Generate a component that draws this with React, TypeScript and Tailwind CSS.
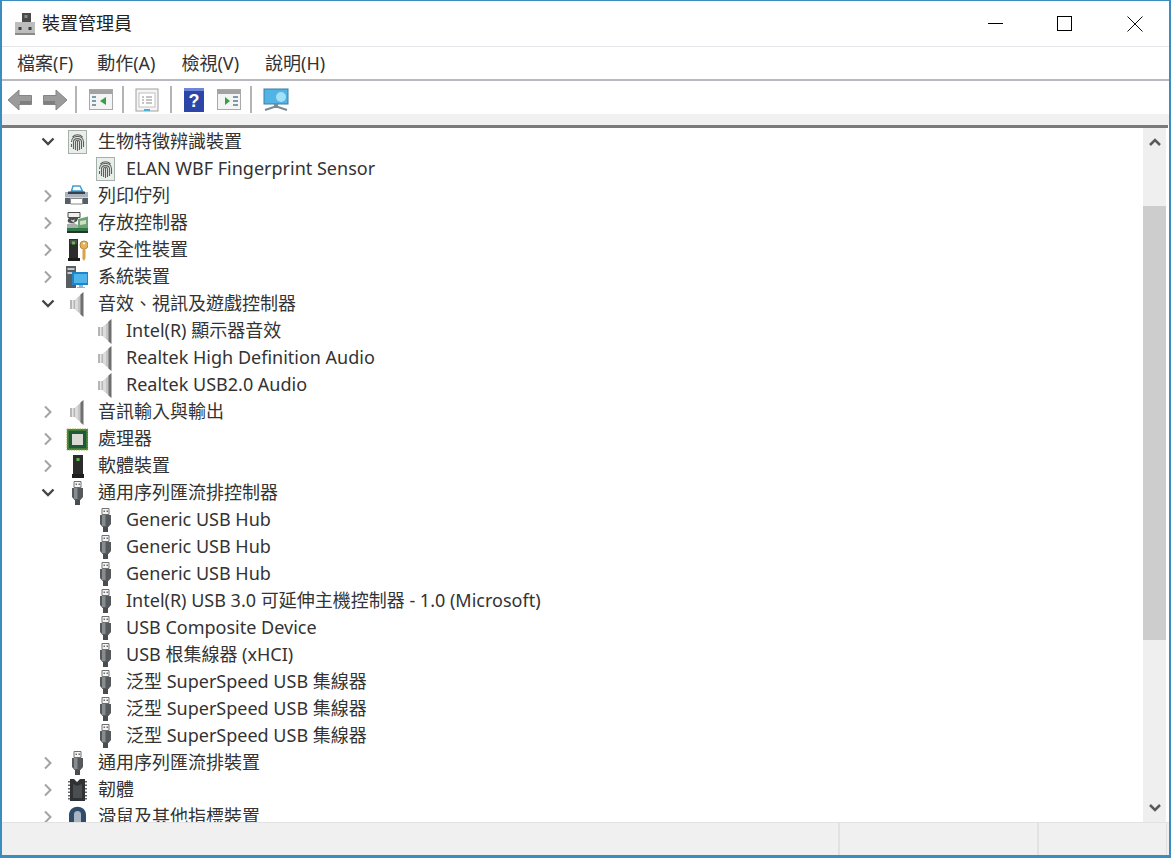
import type { ReactNode } from "react";

const FONT = "font-['Noto_Sans','Noto_Sans_CJK_TC',sans-serif]";

// ── Tree icons ────────────────────────────────────────────────────────────────
function Svg({ children }: { children: ReactNode }) {
  return (
    <svg width="24" height="26" viewBox="0 0 24 26" fill="none">
      {children}
    </svg>
  );
}

function Fingerprint() {
  return (
    <Svg>
      <rect x="4.500" y="1.500" width="18" height="23" fill="#e9eeea" stroke="#a4b0aa" />
      <g stroke="#5f6160" strokeWidth="1.100" fill="none">
        <path d="M8.500 8c3-3 7-3 10 0" />
        <path d="M7.500 13c0-7.500 12-7.500 12 0v5" />
        <path d="M9.500 20v-7c0-4.500 8-4.500 8 0v7" />
        <path d="M11.500 21v-8c0-2.300 4-2.300 4 0v8" />
        <path d="M13.500 12v10" />
        <path d="M7.500 15v3" />
      </g>
    </Svg>
  );
}

function Speaker() {
  return (
    <Svg>
      <path d="M6 9h5v9H6z" fill="#b5b5b5" />
      <path d="M8 9h1.500v9H8z" fill="#e6e6e6" />
      <path d="M11 9l8-7.500v24L11 18z" fill="#c4c4c4" />
      <path d="M16.500 3.500l3-2.500v25l-3-2.500z" fill="#6f6f6f" />
      <path d="M11 9l3-2.500v14.500l-3-3z" fill="#dcdcdc" />
    </Svg>
  );
}

function Usb() {
  return (
    <Svg>
      <path d="M10 1.500h7v6h-7z" fill="#f4f4f4" stroke="#707070" />
      <path d="M11.500 3.500h1.500v1.500h-1.500zM14.500 3.500h1.500v1.500h-1.500z" fill="#6d6d6d" />
      <path d="M8 8h11v9l-2.500 3h-6L8 17z" fill="#55595b" />
      <path d="M10 8h3.500v11H10z" fill="#878c8e" />
      <path d="M11 20h5v5h-5z" fill="#4a4d4f" />
    </Svg>
  );
}

function Printer() {
  return (
    <Svg>
      <path d="M7.500 8l1.500-5h7l2.500 5z" fill="#fff" stroke="#3f9ccf" strokeWidth="1.500" />
      <path d="M1 9h23v6H1z" fill="#aab3bb" />
      <path d="M4 8.500h17V11H4z" fill="#34424f" />
      <path d="M1 14h24v2H1z" fill="#cfd5da" />
      <path d="M1 15h5v6H1zM19 15h6v6h-6z" fill="#555f69" />
      <path d="M6.500 15.500h12v5.500h-12z" fill="#fff" stroke="#8a8a8a" />
    </Svg>
  );
}

function Storage() {
  return (
    <Svg>
      <path d="M4 2.500h12v5H4z" fill="#efefef" stroke="#4b4b4b" />
      <path d="M5 8c-2 2-2 5 2 5s7-2 7-5z" fill="#4e4e4e" />
      <path d="M7 9.500c1 1 3 1 4-.5l-1 3c-2 0-3-1-3-2.500z" fill="#dcdcdc" />
      <path d="M14 9l10-2.500V18H14z" fill="#6ea37a" />
      <path d="M3 14l7-1 4 2v3H3z" fill="#a8aeaa" />
      <path d="M16 11l6-1v4l-6 1z" fill="#cfe0bd" />
      <path d="M3 18h21v3H3z" fill="#2f7a45" />
      <path d="M3 21h21v2H3z" fill="#2d2f2e" />
    </Svg>
  );
}

function Security() {
  return (
    <Svg>
      <path d="M5 2h9v19H5z" fill="#2c2c2c" />
      <path d="M6 3h7v4H6z" fill="#4d4d4d" />
      <path d="M8 4.500h3v3H8z" fill="#63b54f" />
      <path d="M4 21h12v3H4z" fill="#1c1c1c" />
      <circle cx="20" cy="8" r="4" fill="#e3b15f" stroke="#b98a35" />
      <path d="M18.500 11h3v10l-1.500 3-1.500-2z" fill="#d8a249" />
      <circle cx="20" cy="6.500" r="1.100" fill="#fff" />
    </Svg>
  );
}

function System() {
  return (
    <Svg>
      <path d="M2 2h10v22H2z" fill="#585d62" />
      <path d="M3.500 4h7v2h-7zM3.500 8h7v2h-7z" fill="#c2c8cc" />
      <path d="M8 8h17v13H8z" fill="#1d86cb" />
      <path d="M10 10h13v9H10z" fill="#4fb4ea" />
      <path d="M15 21h4v2h2v1h-8v-1h2z" fill="#89b7cf" />
    </Svg>
  );
}

function Cpu() {
  return (
    <Svg>
      <rect x="3" y="3" width="21" height="21" fill="#3f7c35" stroke="#a5a244" strokeDasharray="1.500 1" />
      <rect x="5" y="5" width="17" height="17" fill="#1c5a38" />
      <rect x="8" y="8" width="11" height="11" fill="#dadad2" />
    </Svg>
  );
}

function Software() {
  return (
    <Svg>
      <path d="M9 2h10v19H9z" fill="#2b2b2b" />
      <path d="M12.500 5h3v3h-3z" fill="#63b54f" />
      <path d="M8 21h12v4H8z" fill="#1e1e1e" />
    </Svg>
  );
}

function Firmware() {
  return (
    <Svg>
      <path d="M6 2h4l3 3 3-3h5v22H6z" fill="#2f3234" />
      <path d="M9 7l4 2 5-2v14H9z" fill="#4a4e50" />
      <path d="M4 4h2v1.500H4zM4 7.500h2V9H4zM4 11h2v1.500H4zM4 14.500h2V16H4zM4 18h2v1.500H4zM4 21h2v1.500H4zM21 4h2v1.500h-2zM21 7.500h2V9h-2zM21 11h2v1.500h-2zM21 14.500h2V16h-2zM21 18h2v1.500h-2zM21 21h2v1.500h-2z" fill="#666" />
    </Svg>
  );
}

function Mouse() {
  return (
    <Svg>
      <path d="M5 26V11C5 0 22 0 22 11v15z" fill="#2f4d6b" />
      <path d="M10 26V10c0-4 7-4 7 0v16z" fill="#a9b6c2" />
    </Svg>
  );
}

function ChevronOpen() {
  return (
    <svg width="16" height="12" viewBox="0 0 16 12" fill="none">
      <path d="M2.500 2.500L8 8l5.500-5.500" stroke="#454545" strokeWidth="2.400" />
    </svg>
  );
}

function ChevronClosed() {
  return (
    <svg width="16" height="16" viewBox="0 0 16 16" fill="none">
      <path d="M5 2.500L10.500 8 5 13.500" stroke="#a3a3a3" strokeWidth="2" />
    </svg>
  );
}

// ── Tree data ─────────────────────────────────────────────────────────────────
type Row = { label: string; icon: () => ReactNode; state?: "open" | "closed" };

const ROWS: Row[] = [
  { label: "生物特徵辨識裝置", icon: Fingerprint, state: "open" },
  { label: "ELAN WBF Fingerprint Sensor", icon: Fingerprint },
  { label: "列印佇列", icon: Printer, state: "closed" },
  { label: "存放控制器", icon: Storage, state: "closed" },
  { label: "安全性裝置", icon: Security, state: "closed" },
  { label: "系統裝置", icon: System, state: "closed" },
  { label: "音效、視訊及遊戲控制器", icon: Speaker, state: "open" },
  { label: "Intel(R) 顯示器音效", icon: Speaker },
  { label: "Realtek High Definition Audio", icon: Speaker },
  { label: "Realtek USB2.0 Audio", icon: Speaker },
  { label: "音訊輸入與輸出", icon: Speaker, state: "closed" },
  { label: "處理器", icon: Cpu, state: "closed" },
  { label: "軟體裝置", icon: Software, state: "closed" },
  { label: "通用序列匯流排控制器", icon: Usb, state: "open" },
  { label: "Generic USB Hub", icon: Usb },
  { label: "Generic USB Hub", icon: Usb },
  { label: "Generic USB Hub", icon: Usb },
  { label: "Intel(R) USB 3.0 可延伸主機控制器 - 1.0 (Microsoft)", icon: Usb },
  { label: "USB Composite Device", icon: Usb },
  { label: "USB 根集線器 (xHCI)", icon: Usb },
  { label: "泛型 SuperSpeed USB 集線器", icon: Usb },
  { label: "泛型 SuperSpeed USB 集線器", icon: Usb },
  { label: "泛型 SuperSpeed USB 集線器", icon: Usb },
  { label: "通用序列匯流排裝置", icon: Usb, state: "closed" },
  { label: "韌體", icon: Firmware, state: "closed" },
  { label: "滑鼠及其他指標裝置", icon: Mouse, state: "closed" },
];

function TreeRow({ row }: { row: Row }) {
  const Icon = row.icon;
  return (
    <div className="flex h-[27px] shrink-0 items-center">
      {row.state ? (
        <>
          <div className="ml-[38px] flex w-[16px] justify-center">
            {row.state === "open" ? <ChevronOpen /> : <ChevronClosed />}
          </div>
          <div className="ml-[8px] w-[24px]">
            <Icon />
          </div>
        </>
      ) : (
        <div className="ml-[90px] w-[24px]">
          <Icon />
        </div>
      )}
      <span className="ml-[10px] whitespace-nowrap">{row.label}</span>
    </div>
  );
}

// ── Toolbar icons ─────────────────────────────────────────────────────────────
function Arrow({ flip }: { flip?: boolean }) {
  return (
    <svg width="26" height="24" viewBox="0 0 26 24" className={flip ? "-scale-x-100" : ""}>
      <path d="M1 12L12 2v5.500h12.500v9H12V22z" fill="#9b9b9b" stroke="#858585" />
      <path d="M13 13h11v3H13z" fill="#7f7f7f" />
    </svg>
  );
}

function PaneIcon({ right }: { right?: boolean }) {
  return (
    <svg width="24" height="21" viewBox="0 0 24 21">
      <rect x="0.500" y="0.500" width="23" height="20" fill="#f4f4f4" stroke="#a8a8a8" />
      <rect x="1" y="1" width="22" height="4" fill="#a3a3a3" />
      {right ? (
        <>
          <path d="M8 8v8l5-4z" fill="#35a045" />
          <path d="M16 8h5M16 12h5M16 16h5" stroke="#7d9aa8" strokeWidth="2" />
        </>
      ) : (
        <>
          <path d="M17 8v8l-6-4z" fill="#35a045" />
          <path d="M3 8h4M3 12h4M3 16h4" stroke="#7d9aa8" strokeWidth="2" />
        </>
      )}
    </svg>
  );
}

function Separator() {
  return <div className="h-[27px] w-[2px] bg-[#b4b4b4]" />;
}

export default function App() {
  return (
    <div className={`flex h-[858px] w-[1171px] flex-col overflow-hidden border-2 border-t border-b-[3px] border-[#3c8dbf] bg-white text-[18px] text-[#333] ${FONT}`}>
      {/* Title bar */}
      <div className="flex h-[46px] shrink-0 items-center border-b border-[#e6e6ea]">
        <svg width="22" height="24" viewBox="0 0 22 24" className="ml-[12px]">
          <path d="M8 1h9v10H8z" fill="#4a4a4a" />
          <path d="M10.500 3h3v3h-3z" fill="#8a8a8a" />
          <path d="M1 10h20v12H1z" fill="#bdbdbd" />
          <path d="M4.500 15h3v3h-3zM14.500 15h3v3h-3z" fill="#3f3f3f" />
          <path d="M1 21h20v2H1z" fill="#8a8a8a" />
        </svg>
        <span className="ml-[6px] text-[#222]">裝置管理員</span>
        <div className="ml-auto flex items-center">
          <div className="h-[1px] w-[15px] bg-black" />
          <div className="ml-[54px] h-[15px] w-[15px] border border-black" />
          <svg width="16" height="16" viewBox="0 0 16 16" className="ml-[55px] mr-[26px]">
            <path d="M.5.500l15 15M15.500.500l-15 15" stroke="#111" />
          </svg>
        </div>
      </div>

      {/* Menu bar */}
      <div className="flex h-[34px] shrink-0 items-center border-b-2 border-[#b9b9c0] pl-[15px]">
        <span>檔案(F)</span>
        <span className="ml-[24px]">動作(A)</span>
        <span className="ml-[26px]">檢視(V)</span>
        <span className="ml-[26px]">說明(H)</span>
      </div>

      {/* Toolbar */}
      <div className="flex h-[33px] shrink-0 items-center pt-[4px] pl-[5px]">
        <Arrow />
        <div className="ml-[9px]">
          <Arrow flip />
        </div>
        <div className="ml-[7px]"><Separator /></div>
        <div className="ml-[12px]"><PaneIcon /></div>
        <div className="ml-[9px]"><Separator /></div>
        <svg width="24" height="24" viewBox="0 0 24 24" className="ml-[11px]">
          <rect x="1" y="1" width="22" height="22" fill="#f5f5f5" stroke="#a0a0a0" />
          <rect x="4" y="5" width="16" height="14" fill="#fff" stroke="#c0c0c0" />
          <path d="M7 9h2M11 9h6M7 12h2M11 12h6M7 15h2M11 15h6" stroke="#8a8a8a" />
          <path d="M9 21h6v2H9z" fill="#45b0d8" />
        </svg>
        <div className="ml-[11px]"><Separator /></div>
        <svg width="20" height="24" viewBox="0 0 20 24" className="ml-[12px]">
          <rect x="0" y="0" width="20" height="24" fill="#2c46a8" />
          <rect x="0" y="0" width="20" height="3" fill="#6f86d8" />
          <text x="10" y="19" textAnchor="middle" fontSize="18" fontWeight="700" fill="#fff" fontFamily="Liberation Sans">?</text>
        </svg>
        <div className="ml-[13px]"><PaneIcon right /></div>
        <div className="ml-[9px]"><Separator /></div>
        <svg width="26" height="24" viewBox="0 0 26 24" className="ml-[11px]">
          <rect x="1" y="1" width="24" height="15" fill="#52b4e4" stroke="#3a7ea8" />
          <circle cx="18" cy="9" r="5" fill="#a4e0f8" />
          <path d="M11 16h4v3H11z" fill="#7a8a94" />
          <path d="M2 22l9-3h4l9 3" stroke="#7a8a94" strokeWidth="2" fill="none" />
        </svg>
      </div>

      {/* Strip above the tree */}
      <div className="h-[11px] shrink-0 bg-[#f1f1f1]" />
      <div className="mr-[1px] h-[3px] shrink-0 bg-[#7b7b7b]" />

      {/* Tree + scrollbar */}
      <div className="flex min-h-0 flex-1">
        <div className="flex min-w-0 flex-1 flex-col overflow-hidden">
          {ROWS.map((row, i) => (
            <TreeRow key={i} row={row} />
          ))}
        </div>
        <div className="mr-[3px] flex w-[23px] shrink-0 flex-col items-center bg-[#efefef]">
          <svg width="14" height="10" viewBox="0 0 14 10" className="mt-[9px]">
            <path d="M2 8l5-5 5 5" stroke="#5a5a5a" strokeWidth="2.500" fill="none" />
          </svg>
          <div className="mt-[59px] h-[434px] w-full bg-[#cdcdcd]" />
          <svg width="14" height="10" viewBox="0 0 14 10" className="mt-auto mb-[9px]">
            <path d="M2 2l5 5 5-5" stroke="#5a5a5a" strokeWidth="2.500" fill="none" />
          </svg>
        </div>
      </div>

      {/* Status bar */}
      <div className="flex h-[33px] shrink-0 border-t border-[#e2e2e2] bg-[#f0f0f0]">
        <div className="w-[838px] border-r-2 border-[#e2e2e2]" />
        <div className="w-[199px] border-r-2 border-[#e2e2e2]" />
        <div className="w-[128px] border-r border-[#e2e2e2]" />
      </div>
    </div>
  );
}
